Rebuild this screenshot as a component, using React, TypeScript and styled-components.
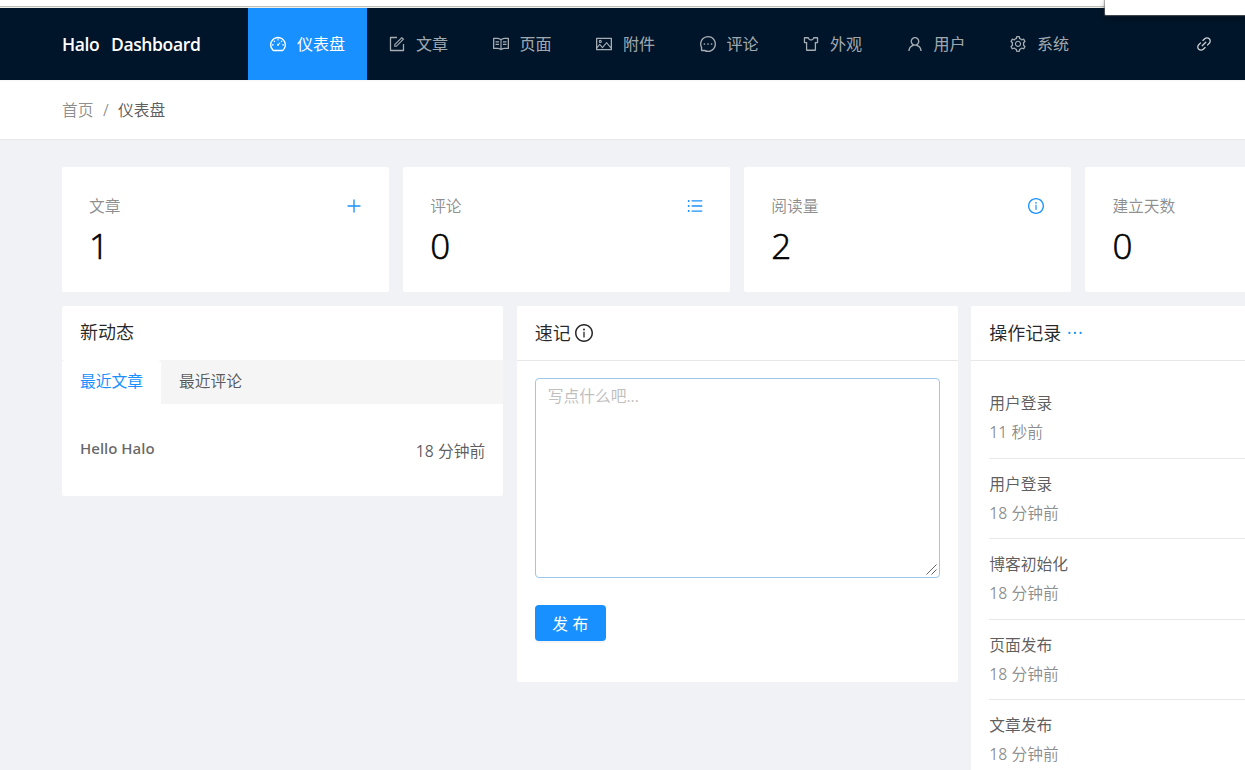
import React from "react";
import styled, { createGlobalStyle } from "styled-components";
import {
  AiOutlineDashboard,
  AiOutlineForm,
  AiOutlineRead,
  AiOutlinePicture,
  AiOutlineMessage,
  AiOutlineSkin,
  AiOutlineUser,
  AiOutlineSetting,
  AiOutlineLink,
  AiOutlinePlus,
  AiOutlineUnorderedList,
  AiOutlineInfoCircle,
  AiOutlineEllipsis,
} from "react-icons/ai";

const GlobalStyle = createGlobalStyle`
  * { box-sizing: border-box; }
  body {
    margin: 0;
    overflow: hidden;
    font-family: "Open Sans", "Noto Sans CJK SC", sans-serif;
    font-size: 15.75px;
    color: rgba(0, 0, 0, 0.65);
    background: #f0f2f5;
  }
  svg { display: block; flex: none; }
`;

const Page = styled.div`
  position: relative;
  width: 1245px;
  height: 770px;
  overflow: hidden;
  background: #f0f2f5;
`;

const WindowEdge = styled.div`
  height: 8px;
  background: #fff;
  border-bottom: 1px solid #eeeeec;
  box-shadow: inset 0 -1px 0 #bfc1b8;
`;

const Popup = styled.div`
  position: absolute;
  top: 0;
  right: 0;
  width: 140px;
  height: 15px;
  background: #fff;
  border-radius: 0 0 0 1px;
  box-shadow: 0 0 1px 1px rgba(120, 120, 120, 0.6), 0 2px 6px rgba(0, 0, 0, 0.4);
`;

const Header = styled.header`
  display: flex;
  height: 72px;
  padding-left: 62px;
  background: #001529;
`;

const Brand = styled.div`
  width: 186px;
  line-height: 72px;
  font-size: 17.5px;
  font-weight: 600;
  letter-spacing: -0.37px;
  word-spacing: 7.4px;
  color: #fff;
  white-space: nowrap;
`;

const Nav = styled.nav`
  display: flex;
  flex: 1;
`;

const NavItem = styled.a<{ $active?: boolean }>`
  display: flex;
  align-items: center;
  gap: 11px;
  height: 72px;
  padding: 0 ${(p) => (p.$active ? 22 : 22.5)}px 0 22px;
  line-height: 72px;
  font-size: 16px;
  white-space: nowrap;
  color: ${(p) => (p.$active ? "#fff" : "rgba(255, 255, 255, 0.65)")};
  background: ${(p) => (p.$active ? "#1890ff" : "transparent")};
`;

const HeaderLink = styled.a`
  display: flex;
  align-items: center;
  margin-right: 33px;
  color: rgba(255, 255, 255, 0.8);
`;

const Breadcrumb = styled.div`
  display: flex;
  gap: 9.4px;
  height: 60px;
  padding-left: 62px;
  line-height: 60px;
  background: #fff;
  border-bottom: 1px solid #e8e8e8;
  box-shadow: inset 0 2px 3px -2px rgba(0, 0, 0, 0.08);
`;

const Crumb = styled.span<{ $muted?: boolean }>`
  color: ${(p) => (p.$muted ? "rgba(0, 0, 0, 0.45)" : "rgba(0, 0, 0, 0.65)")};
`;

const Content = styled.main`
  width: 1350.5px;
  margin: 27px 0 0 62px;
`;

const Row = styled.div<{ $cols: number; $gap: number }>`
  display: grid;
  grid-template-columns: repeat(${(p) => p.$cols}, 1fr);
  align-items: start;
  gap: ${(p) => p.$gap}px;
  margin-bottom: 14px;
`;

const StatCard = styled.section`
  height: 125px;
  padding: 27px 27px 0;
  background: #fff;
  border-radius: 2px;
`;

const StatTop = styled.div`
  display: flex;
  justify-content: space-between;
  height: 25px;
  line-height: 25px;
  color: rgba(0, 0, 0, 0.45);
  svg {
    margin-top: 4px;
    color: #1890ff;
  }
`;

const StatValue = styled.div`
  margin-top: 5px;
  height: 43px;
  line-height: 43px;
  font-size: 35px;
  font-weight: 300;
  color: #000;
  -webkit-text-stroke: 0.6px #000;
`;

const Panel = styled.section<{ $height: number }>`
  height: ${(p) => p.$height}px;
  background: #fff;
  border-radius: 2px;
`;

const PanelHead = styled.div<{ $divided?: boolean }>`
  display: flex;
  align-items: center;
  gap: 4px;
  height: ${(p) => (p.$divided ? 55 : 54)}px;
  padding: ${(p) => (p.$divided ? "0 18px" : "0 18px 2px")};
  line-height: 52px;
  font-size: 18px;
  color: rgba(0, 0, 0, 0.85);
  border-bottom: ${(p) => (p.$divided ? "1px solid #e8e8e8" : "none")};
`;

const More = styled(AiOutlineEllipsis)`
  margin-left: 1px;
  color: #1890ff;
`;

const Tabs = styled.div`
  display: flex;
  height: 44px;
  background: #f5f5f5;
`;

const Tab = styled.div<{ $active?: boolean }>`
  padding: 0 18px;
  line-height: 43px;
  border-radius: 4px 4px 0 0;
  color: ${(p) => (p.$active ? "#1890ff" : "rgba(0, 0, 0, 0.65)")};
  background: ${(p) => (p.$active ? "#fff" : "transparent")};
`;

const PostRow = styled.div`
  display: flex;
  justify-content: space-between;
  padding: 32px 18px 0;
  line-height: 25px;
`;

const PostTitle = styled.span`
  font-size: 15px;
  font-weight: 600;
  color: rgba(0, 0, 0, 0.6);
`;

const PostTime = styled.span`
  padding-top: 3px;
`;

const NoteBody = styled.div`
  display: flex;
  flex-direction: column;
  align-items: flex-start;
  gap: 27px;
  padding: 17px 18px;
`;

const NoteField = styled.div`
  position: relative;
  width: 100%;
`;

const NoteInput = styled.textarea`
  display: block;
  width: 100%;
  height: 200px;
  padding: 5px 12px;
  font: inherit;
  line-height: 25px;
  border: 1px solid #9cc6ea;
  border-radius: 4px;
  outline: none;
  resize: none;
  &::placeholder { color: #bfbfbf; }
`;

const Grip = styled.svg`
  position: absolute;
  right: 3px;
  bottom: 3px;
  pointer-events: none;
`;

const Publish = styled.button`
  width: 71px;
  height: 36px;
  padding: 2px 0 0;
  font: inherit;
  letter-spacing: 4.5px;
  text-indent: 4.5px;
  line-height: 34px;
  color: #fff;
  background: #1890ff;
  border: 0;
  border-radius: 4px;
  box-shadow: 0 2px 0 rgba(0, 0, 0, 0.045);
`;

const LogList = styled.ul`
  margin: 0;
  padding: 17.4px 18px 0;
  list-style: none;
`;

const LogItem = styled.li`
  height: 80.5px;
  padding-top: 13px;
  border-bottom: 1px solid #e8e8e8;
`;

const LogTitle = styled.div`
  height: 28.8px;
  line-height: 25px;
`;

const LogTime = styled.div`
  line-height: 25px;
  color: rgba(0, 0, 0, 0.45);
`;

/* Ant icons carry a 64-unit margin; this crops it so the drawing fills its box. */
const tight = "64 64 896 896";

const menu = [
  { label: "仪表盘", Icon: AiOutlineDashboard },
  { label: "文章", Icon: AiOutlineForm },
  { label: "页面", Icon: AiOutlineRead },
  { label: "附件", Icon: AiOutlinePicture },
  { label: "评论", Icon: AiOutlineMessage },
  { label: "外观", Icon: AiOutlineSkin },
  { label: "用户", Icon: AiOutlineUser },
  { label: "系统", Icon: AiOutlineSetting },
];

const stats = [
  { label: "文章", value: 1, Icon: AiOutlinePlus },
  { label: "评论", value: 0, Icon: AiOutlineUnorderedList },
  { label: "阅读量", value: 2, Icon: AiOutlineInfoCircle },
  { label: "建立天数", value: 0, Icon: AiOutlineInfoCircle },
];

const logs = [
  ["用户登录", "11 秒前"],
  ["用户登录", "18 分钟前"],
  ["博客初始化", "18 分钟前"],
  ["页面发布", "18 分钟前"],
  ["文章发布", "18 分钟前"],
];

export default function App() {
  return (
    <Page>
      <GlobalStyle />
      <WindowEdge />
      <Header>
        <Brand>Halo Dashboard</Brand>
        <Nav>
          {menu.map(({ label, Icon }, i) => (
            <NavItem key={label} $active={i === 0}>
              <Icon size={16} viewBox={tight} />
              {label}
            </NavItem>
          ))}
        </Nav>
        <HeaderLink>
          <AiOutlineLink size={16} viewBox={tight} />
        </HeaderLink>
      </Header>
      <Breadcrumb>
        <Crumb $muted>首页</Crumb>
        <Crumb $muted>/</Crumb>
        <Crumb>仪表盘</Crumb>
      </Breadcrumb>
      <Content>
        <Row $cols={4} $gap={14}>
          {stats.map(({ label, value, Icon }) => (
            <StatCard key={label}>
              <StatTop>
                {label}
                <Icon size={16} viewBox={tight} />
              </StatTop>
              <StatValue>{value}</StatValue>
            </StatCard>
          ))}
        </Row>
        <Row $cols={3} $gap={13.5}>
          <Panel $height={190}>
            <PanelHead>新动态</PanelHead>
            <Tabs>
              <Tab $active>最近文章</Tab>
              <Tab>最近评论</Tab>
            </Tabs>
            <PostRow>
              <PostTitle>Hello Halo</PostTitle>
              <PostTime>18 分钟前</PostTime>
            </PostRow>
          </Panel>
          <Panel $height={376}>
            <PanelHead $divided>
              速记
              <AiOutlineInfoCircle size={18} viewBox={tight} />
            </PanelHead>
            <NoteBody>
              <NoteField>
                <NoteInput placeholder="写点什么吧..." />
                <Grip width="11" height="11" viewBox="0 0 11 11">
                  <path d="M0.5 10.5L10.5 0.5M5.5 10.5L10.5 5.5" stroke="#555" strokeWidth="0.9" />
                </Grip>
              </NoteField>
              <Publish>发布</Publish>
            </NoteBody>
          </Panel>
          <Panel $height={500}>
            <PanelHead $divided>
              操作记录
              <More size={18} viewBox={tight} />
            </PanelHead>
            <LogList>
              {logs.map(([title, time], i) => (
                <LogItem key={i}>
                  <LogTitle>{title}</LogTitle>
                  <LogTime>{time}</LogTime>
                </LogItem>
              ))}
            </LogList>
          </Panel>
        </Row>
      </Content>
      <Popup />
    </Page>
  );
}
